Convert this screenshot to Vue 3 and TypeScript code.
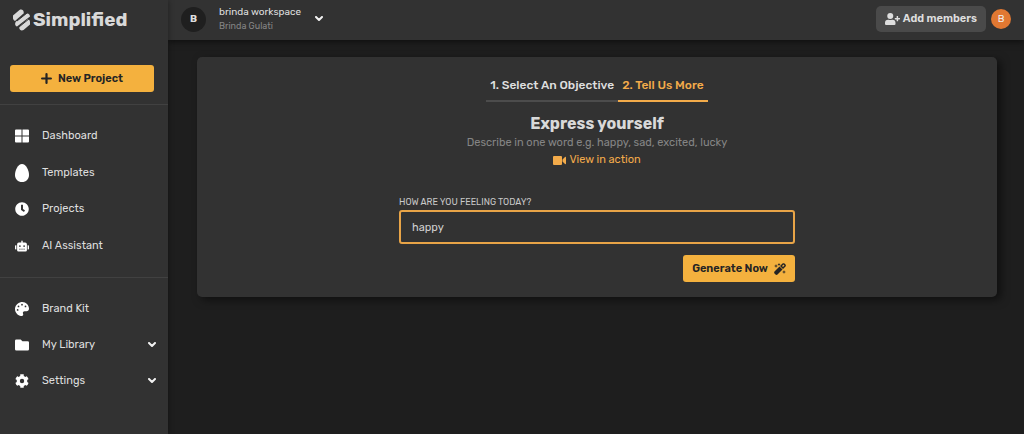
<script setup lang="ts">
import { ref } from 'vue'

interface NavItem {
  label: string
  icon: string
  viewBox: string
  size: 'regular' | 'tall' | 'wide'
  expandable?: boolean
}

const mainNav: NavItem[] = [
  {
    label: 'Dashboard',
    viewBox: '0 0 28 26',
    size: 'regular',
    icon: 'M2 0h11v12H0V2a2 2 0 0 1 2-2zM15 0h11a2 2 0 0 1 2 2v10H15zM0 14h13v12H2a2 2 0 0 1-2-2zM15 14h13v10a2 2 0 0 1-2 2H15z',
  },
  {
    label: 'Templates',
    viewBox: '0 0 400 512',
    size: 'tall',
    icon: 'M200 0C84 0 0 180 0 310c0 116 84 202 200 202s200-86 200-202C400 180 316 0 200 0z',
  },
  {
    label: 'Projects',
    viewBox: '0 0 512 512',
    size: 'regular',
    icon: 'M256 8C119 8 8 119 8 256s111 248 248 248 248-111 248-248S393 8 256 8zm57 350-88-64c-3-2-5-6-5-10V116c0-7 5-12 12-12h48c7 0 12 5 12 12v138l65 47c5 4 6 11 3 17l-29 38c-4 5-12 6-18 2z',
  },
  {
    label: 'AI Assistant',
    viewBox: '0 0 640 512',
    size: 'wide',
    icon: 'M32 224h32v192H32a32 32 0 0 1-32-32V256a32 32 0 0 1 32-32zm512-48v272a64 64 0 0 1-64 64H160a64 64 0 0 1-64-64V176a80 80 0 0 1 80-80h112V32a32 32 0 0 1 64 0v64h112a80 80 0 0 1 80 80zM264 256a40 40 0 1 0-80 0 40 40 0 0 0 80 0zm-8 128h-64v32h64zm96 0h-64v32h64zm104-128a40 40 0 1 0-80 0 40 40 0 0 0 80 0zm-8 128h-64v32h64zm192-128v128a32 32 0 0 1-32 32h-32V224h32a32 32 0 0 1 32 32z',
  },
]

const brandNav: NavItem[] = [
  {
    label: 'Brand Kit',
    viewBox: '0 0 512 512',
    size: 'regular',
    icon: 'M204 5C105 24 25 104 6 203c-37 194 131 327 249 308 38-6 57-51 39-85-21-42 9-91 56-91h74c48 0 88-40 88-88C511 95 370-27 204 5zM96 320a32 32 0 1 1 0-64 32 32 0 0 1 0 64zm32-128a32 32 0 1 1 0-64 32 32 0 0 1 0 64zm128-64a32 32 0 1 1 0-64 32 32 0 0 1 0 64zm128 64a32 32 0 1 1 0-64 32 32 0 0 1 0 64z',
  },
  {
    label: 'My Library',
    viewBox: '0 0 512 400',
    size: 'wide',
    icon: 'M464 64H272L208 0H48A48 48 0 0 0 0 48v304a48 48 0 0 0 48 48h416a48 48 0 0 0 48-48V112a48 48 0 0 0-48-48z',
    expandable: true,
  },
  {
    label: 'Settings',
    viewBox: '0 0 512 512',
    size: 'regular',
    icon: 'M487 316l-42-25c4-23 4-47 0-70l42-25c5-3 8-9 6-14-11-36-30-68-55-95-4-4-10-5-15-2l-42 24c-18-15-39-27-61-35V25c0-6-4-11-9-12-37-8-74-8-110 0-6 1-10 6-10 12v49c-22 8-43 20-61 35L88 85c-5-3-11-2-15 2-25 27-44 59-55 95-2 5 0 11 5 14l43 25c-4 23-4 47 0 70l-43 25c-5 3-7 9-5 14 11 36 30 68 55 95 4 4 10 5 15 2l42-24c18 15 39 27 61 35v49c0 6 4 11 10 12 36 8 73 8 110 0 5-1 9-6 9-12v-49c22-8 43-20 61-35l42 24c5 3 11 2 15-2 25-27 44-59 55-95 2-5-1-11-6-14zM256 336a80 80 0 1 1 0-160 80 80 0 0 1 0 160z',
    expandable: true,
  },
]

const groups = [mainNav, brandNav]
const feeling = ref('happy')
</script>

<template>
  <div class="app">
    <aside class="sidebar">
      <a class="brand" href="#">
        <svg class="brand-mark" viewBox="0 0 34 44" aria-hidden="true">
          <g fill="currentColor">
            <path d="M0 13 13 2c5-3 10 2 8 7L4 24c-4-2-5-7-4-11z" />
            <path d="M6 25 27 9c4-1 7 2 7 6L8 35c-4-1-5-6-2-10z" />
            <path d="M34 31 21 42c-5 3-10-2-8-7l17-15c4 2 5 7 4 11z" />
          </g>
          <path d="M8 24 28 8M12 36 33 19" fill="none" stroke="#323232" stroke-width="2" />
        </svg>
        <span>Simplified</span>
      </a>
      <div class="create">
        <button class="primary new-project" type="button">
          <svg viewBox="0 0 10 10" aria-hidden="true">
            <path d="M5 1v8M1 5h8" fill="none" stroke="currentColor" stroke-width="2" stroke-linecap="round" />
          </svg>
          New Project
        </button>
      </div>
      <nav v-for="(group, index) in groups" :key="index" class="nav-group">
        <a v-for="item in group" :key="item.label" class="nav-item" href="#">
          <svg class="nav-icon" :class="item.size" :viewBox="item.viewBox" aria-hidden="true">
            <path :d="item.icon" fill="currentColor" fill-rule="evenodd" />
          </svg>
          <span class="nav-label">{{ item.label }}</span>
          <svg v-if="item.expandable" class="chevron" viewBox="0 0 8 6" aria-hidden="true">
            <path d="m1 1 3 3 3-3" />
          </svg>
        </a>
      </nav>
    </aside>

    <div class="main">
      <header class="topbar">
        <button class="workspace" type="button">
          <span class="workspace-avatar">B</span>
          <span class="workspace-text">
            <span class="workspace-name">brinda workspace</span>
            <span class="workspace-owner">Brinda Gulati</span>
          </span>
          <svg class="chevron" viewBox="0 0 8 6" aria-hidden="true">
            <path d="m1 1 3 3 3-3" />
          </svg>
        </button>
        <div class="account">
          <button class="add-members" type="button">
            <svg viewBox="0 0 640 512" aria-hidden="true">
              <path fill="currentColor" d="M624 208h-64v-64c0-9-7-16-16-16h-32c-9 0-16 7-16 16v64h-64c-9 0-16 7-16 16v32c0 9 7 16 16 16h64v64c0 9 7 16 16 16h32c9 0 16-7 16-16v-64h64c9 0 16-7 16-16v-32c0-9-7-16-16-16zM224 256a128 128 0 1 0 0-256 128 128 0 0 0 0 256zm90 32h-17c-46 21-100 21-146 0h-17A134 134 0 0 0 0 422v42a48 48 0 0 0 48 48h352a48 48 0 0 0 48-48v-42a134 134 0 0 0-134-134z" />
            </svg>
            Add members
          </button>
          <button class="user-avatar" type="button" aria-label="Account">B</button>
        </div>
      </header>

      <main class="content">
        <section class="card">
          <div class="tabs" role="tablist">
            <button class="tab" type="button" role="tab" aria-selected="false">1. Select An Objective</button>
            <button class="tab active" type="button" role="tab" aria-selected="true">2. Tell Us More</button>
          </div>
          <h1>Express yourself</h1>
          <p class="hint">Describe in one word e.g. happy, sad, excited, lucky</p>
          <a class="video-link" href="#">
            <svg viewBox="0 0 26 18" aria-hidden="true">
              <path fill="currentColor" d="M2 0h14a2 2 0 0 1 2 2v14a2 2 0 0 1-2 2H2a2 2 0 0 1-2-2V2a2 2 0 0 1 2-2zM19 7l5-5c1-1 2 0 2 1v12c0 1-1 2-2 1l-5-5z" />
            </svg>
            View in action
          </a>
          <form class="form" @submit.prevent>
            <label for="feeling">HOW ARE YOU FEELING TODAY?</label>
            <input id="feeling" v-model="feeling" type="text" autocomplete="off" spellcheck="false" />
            <button class="primary generate" type="submit">
              Generate Now
              <svg viewBox="0 0 24 24" aria-hidden="true">
                <g fill="currentColor">
                  <path d="M1 17 11 7l6 6L7 23c-1 1-3 1-4 0l-2-2c-1-1-1-3 0-4z" />
                  <path fill-rule="evenodd" d="m12 6 5-5c1-1 3-1 4 0l2 2c1 1 1 3 0 4l-5 5zm4 0 2 2 3-3-2-2z" />
                  <path d="m4 2 1 3 3 1-3 1-1 3-1-3-3-1 3-1zM10 0l1 2 2 1-2 1-1 2-1-2-2-1 2-1zM20 14l1 3 3 1-3 1-1 3-1-3-3-1 3-1z" />
                </g>
              </svg>
            </button>
          </form>
        </section>
      </main>
    </div>
  </div>
</template>

<style>
body {
  margin: 0;
  background: #1e1e1e;
}
</style>

<style scoped>
.app {
  display: flex;
  min-height: 100vh;
  font-family: Rubik, Roboto, 'Noto Sans', sans-serif;
  font-size: 11px;
  line-height: 16px;
  color: #dedede;
}

button,
input {
  box-sizing: border-box;
  margin: 0;
  padding: 0;
  border: 0;
  background: none;
  color: inherit;
  font: inherit;
}

button {
  cursor: pointer;
}

a {
  color: inherit;
  text-decoration: none;
}

svg {
  display: block;
  flex: none;
}

.sidebar {
  flex: 0 0 168px;
  background: #323232;
  box-shadow: 0 0 6px rgba(0, 0, 0, 0.4);
  z-index: 1;
}

.brand {
  display: flex;
  align-items: center;
  gap: 3px;
  height: 39px;
  padding-left: 13px;
  color: #d9d9d9;
  font-size: 19px;
  font-weight: 700;
}

.brand-mark {
  width: 17px;
  height: 22px;
}

.create {
  padding: 26px 14px 12px 10px;
}

.primary {
  display: flex;
  align-items: center;
  justify-content: center;
  gap: 6px;
  height: 27px;
  border-radius: 3px;
  background: #f4b13e;
  color: #242424;
  font-weight: 600;
}

.new-project {
  width: 100%;
}

.new-project svg {
  width: 11px;
  height: 11px;
}

.nav-group {
  display: grid;
  align-content: space-between;
  padding: 13px 0;
  border-top: 1px solid #414141;
}

.nav-group:first-of-type {
  min-height: 146px;
}

.nav-item {
  display: flex;
  align-items: center;
  height: 36px;
  padding: 0 12px 0 15px;
}

.nav-icon {
  width: 14px;
  height: 14px;
  margin-right: 13px;
  color: #fff;
}

.nav-icon.tall {
  height: 18px;
}

.nav-icon.wide {
  height: 12px;
}

.nav-label {
  flex: 1;
}

.chevron {
  width: 8px;
  height: 6px;
  fill: none;
  stroke: #f2f2f2;
  stroke-width: 2;
  stroke-linecap: round;
  stroke-linejoin: round;
}

.main {
  display: flex;
  flex: 1;
  flex-direction: column;
  min-width: 0;
}

.topbar {
  display: flex;
  align-items: center;
  justify-content: space-between;
  height: 38px;
  padding: 0 13px 2px;
  background: #323232;
  box-shadow: 0 2px 6px rgba(0, 0, 0, 0.5);
}

.workspace {
  display: flex;
  align-items: center;
  text-align: left;
}

.workspace-avatar {
  width: 25px;
  margin-right: 13px;
  border-radius: 50%;
  background: #1f1f1f;
  font-size: 10px;
  font-weight: 700;
  line-height: 25px;
  text-align: center;
}

.workspace-text {
  display: grid;
  margin-right: 14px;
  line-height: 14px;
}

.workspace-name {
  font-size: 10px;
}

.workspace-owner {
  color: #858585;
  font-size: 9px;
}

.account {
  display: flex;
  align-items: center;
  gap: 5px;
}

.add-members {
  display: flex;
  align-items: center;
  gap: 3px;
  height: 26px;
  padding: 0 9px;
  border-radius: 5px;
  background: #4a4a4a;
  font-weight: 600;
}

.add-members svg {
  width: 15px;
  height: 12px;
}

.user-avatar {
  width: 20px;
  height: 20px;
  border-radius: 50%;
  background: #e17832;
  color: #f0f0f0;
  font-size: 10px;
}

.content {
  padding: 17px 27px 17px 29px;
}

.card {
  display: flex;
  flex-direction: column;
  align-items: center;
  padding: 15px 16px;
  border-radius: 5px;
  background: #323232;
  box-shadow: 4px 3px 9px rgba(0, 0, 0, 0.5);
}

.tabs {
  display: flex;
}

.tab {
  height: 30px;
  padding: 0 4px 2px;
  border-bottom: 2px solid #4c4c4c;
  font-size: 12px;
  font-weight: 500;
}

.tab.active {
  border-color: #f3ab4a;
  color: #f3ab4a;
}

h1 {
  margin: 12px 0 0;
  color: #d9d9d9;
  font-size: 16px;
  font-weight: 700;
  line-height: 20px;
}

.hint {
  margin: 1px 0 0;
  color: #858585;
}

.video-link {
  display: flex;
  align-items: center;
  gap: 3px;
  margin-top: 1px;
  color: #f3ab4a;
}

.video-link svg {
  width: 13px;
  height: 9px;
}

.form {
  display: flex;
  flex-direction: column;
  width: 100%;
  max-width: 396px;
  margin-top: 26px;
}

label {
  font-size: 9px;
  color: #c8c8c8;
}

input {
  width: 100%;
  height: 34px;
  padding: 0 11px;
  border: 2px solid #e8a447;
  border-radius: 3px;
  outline: none;
  color: #cfcfcf;
}

.generate {
  align-self: flex-end;
  margin-top: 11px;
  padding: 0 9px;
}

.generate svg {
  width: 12px;
  height: 12px;
}
</style>
